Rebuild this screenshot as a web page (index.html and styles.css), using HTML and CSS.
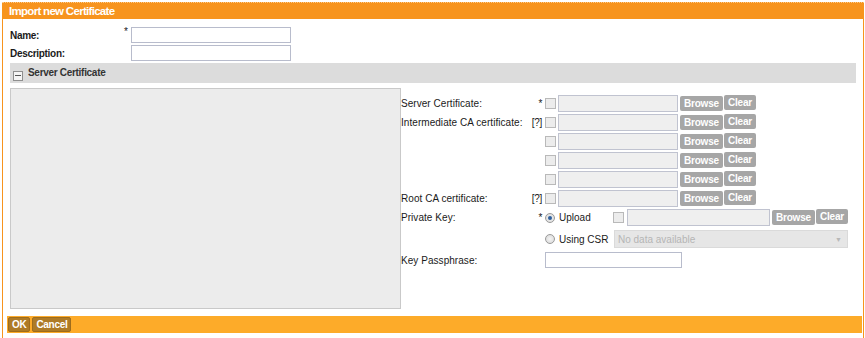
FILE: index.html
```html
<!DOCTYPE html>
<html>
<head>
<meta charset="utf-8">
<link rel="stylesheet" href="styles.css">
</head>
<body>
<div class="dialog">
  <div class="titlebar">Import new Certificate</div>
  <div class="content">
    <div class="frow">
      <span class="flabel">Name:</span><span class="fmark">*</span>
      <span class="text-input"></span>
    </div>
    <div class="frow">
      <span class="flabel">Description:</span><span class="fmark"></span>
      <span class="text-input"></span>
    </div>
    <div class="section-head">
      <span class="collapse-icon"></span>
      <span class="section-title">Server Certificate</span>
    </div>
    <div class="section-body">
      <div class="preview"></div>
      <div class="cert-form">
        <div class="crow">
          <span class="clabel">Server Certificate:</span><span class="cmark">*</span>
          <span class="chk"></span><span class="file-input"></span>
          <span class="btn-grey">Browse</span><span class="btn-grey clear">Clear</span>
        </div>
        <div class="crow">
          <span class="clabel">Intermediate CA certificate:</span><span class="cmark">[?]</span>
          <span class="chk"></span><span class="file-input"></span>
          <span class="btn-grey">Browse</span><span class="btn-grey clear">Clear</span>
        </div>
        <div class="crow">
          <span class="clabel"></span><span class="cmark"></span>
          <span class="chk"></span><span class="file-input"></span>
          <span class="btn-grey">Browse</span><span class="btn-grey clear">Clear</span>
        </div>
        <div class="crow">
          <span class="clabel"></span><span class="cmark"></span>
          <span class="chk"></span><span class="file-input"></span>
          <span class="btn-grey">Browse</span><span class="btn-grey clear">Clear</span>
        </div>
        <div class="crow">
          <span class="clabel"></span><span class="cmark"></span>
          <span class="chk"></span><span class="file-input"></span>
          <span class="btn-grey">Browse</span><span class="btn-grey clear">Clear</span>
        </div>
        <div class="crow">
          <span class="clabel">Root CA certificate:</span><span class="cmark">[?]</span>
          <span class="chk"></span><span class="file-input"></span>
          <span class="btn-grey">Browse</span><span class="btn-grey clear">Clear</span>
        </div>
        <div class="crow key-row">
          <span class="clabel">Private Key:</span><span class="cmark">*</span>
          <span class="radio-opt"><span class="radio checked"></span>Upload</span>
          <span class="chk"></span><span class="file-input wide"></span>
          <span class="btn-grey">Browse</span><span class="btn-grey clear">Clear</span>
        </div>
        <div class="crow csr-row">
          <span class="clabel"></span><span class="cmark"></span>
          <span class="radio-opt"><span class="radio"></span>Using CSR</span>
          <span class="select-box"><span class="select-text">No data available</span><span class="select-arrow">&#9660;</span></span>
        </div>
        <div class="crow pass-row">
          <span class="clabel">Key Passphrase:</span><span class="cmark"></span>
          <span class="pass-input"></span>
        </div>
      </div>
    </div>
  </div>
  <div class="footer">
    <span class="btn-gold">OK</span><span class="btn-gold">Cancel</span>
  </div>
</div>
</body>
</html>
```
FILE: styles.css
```css
html, body {
  margin: 0;
  padding: 0;
  background: #ffffff;
}
body {
  font-family: "Liberation Sans", Arial, sans-serif;
  font-size: 10px;
  color: #1a1a1a;
}
.dialog {
  margin: 2px 0 0 2px;
  width: 860px;
  height: 336px;
  border-left: 1px solid #f7941e;
  border-right: 1px solid #f7941e;
  box-sizing: content-box;
}
.titlebar {
  height: 17px;
  line-height: 16px;
  margin: 0 -1px;
  padding-left: 7px;
  background: #f7941e;
  color: #ffffff;
  font-weight: bold;
  font-size: 11.5px;
  letter-spacing: -0.7px;
  border-top: 1px dotted #fbc98a;
  box-sizing: border-box;
}
.content {
  padding: 8px 0 0 7px;
}
.frow {
  display: flex;
  align-items: center;
  height: 16px;
  margin-bottom: 2px;
}
.flabel {
  width: 108px;
  font-weight: bold;
  letter-spacing: -0.3px;
}
.fmark {
  width: 10px;
  text-align: right;
  line-height: 8px;
  align-self: flex-start;
  padding-top: 1px;
}
.text-input {
  margin-left: 3px;
  width: 160px;
  height: 16px;
  border: 1px solid #b8bccc;
  background: #ffffff;
  box-sizing: border-box;
}
.section-head {
  margin-top: 1px;
  width: 846px;
  height: 20px;
  background: #dcdcdc;
  display: flex;
  align-items: center;
}
.collapse-icon {
  width: 10px;
  height: 10px;
  margin-left: 3px;
  margin-top: 5px;
  border: 1px solid #8f8f8f;
  background: #f4f4f4;
  box-sizing: border-box;
  position: relative;
}
.collapse-icon::after {
  content: "";
  position: absolute;
  left: 1px;
  right: 1px;
  top: 3px;
  height: 1px;
  background: #555555;
}
.section-title {
  margin-left: 5px;
  font-weight: bold;
  color: #333333;
  letter-spacing: -0.3px;
  margin-top: -2px;
}
.section-body {
  display: flex;
  margin-top: 5px;
  width: 846px;
}
.preview {
  width: 391px;
  height: 221px;
  background: #ececec;
  border: 1px solid #c9c9c9;
  box-sizing: border-box;
}
.cert-form {
  padding-top: 7px;
}
.crow {
  display: flex;
  align-items: center;
  height: 17px;
  margin-bottom: 2px;
}
.clabel {
  width: 127px;
  letter-spacing: 0.05px;
  color: #1a1a1a;
}
.cmark {
  width: 14px;
  text-align: right;
  letter-spacing: -0.3px;
}
.chk {
  width: 11px;
  height: 11px;
  margin-left: 3px;
  border: 1px solid #b9b9b9;
  background: #ececec;
  box-sizing: border-box;
}
.file-input {
  margin-left: 2px;
  width: 120px;
  height: 17px;
  border: 1px solid #c0c3d0;
  background: #efefef;
  box-sizing: border-box;
}
.file-input.wide {
  width: 143px;
  margin-left: 3px;
}
.btn-grey {
  margin-left: 2px;
  height: 15px;
  line-height: 15px;
  padding: 0 4px;
  background: #a6a6a6;
  color: #ffffff;
  font-weight: bold;
  border-radius: 2px;
  letter-spacing: -0.2px;
}
.btn-grey.clear {
  margin-left: 1px;
  padding: 0 4px;
  margin-top: -2px;
}
.key-row {
  height: 17px;
  margin-bottom: 4px;
}
.key-row .btn-grey {
  padding: 0 4px;
}
.radio-opt {
  display: flex;
  align-items: center;
  width: 65px;
  margin-left: 3px;
  color: #1a1a1a;
}
.csr-row .radio-opt {
  width: 66px;
}
.radio {
  width: 10px;
  height: 10px;
  border-radius: 50%;
  border: 1px solid #9a9a9a;
  background: radial-gradient(circle, #f4f4f4 0, #d6d6d6 100%);
  box-sizing: border-box;
  margin-right: 4px;
  position: relative;
}
.radio.checked::after {
  content: "";
  position: absolute;
  left: 2px;
  top: 2px;
  width: 4px;
  height: 4px;
  border-radius: 50%;
  background: #2e5f9e;
}
.csr-row {
  height: 18px;
  margin-bottom: 4px;
}
.select-box {
  margin-left: 3px;
  width: 234px;
  height: 18px;
  background: #e6e6e6;
  border: 1px solid #dadada;
  box-sizing: border-box;
  display: flex;
  align-items: center;
  justify-content: space-between;
  padding: 0 5px 0 3px;
  color: #b5b5b5;
}
.select-arrow {
  font-size: 7px;
  color: #b8b8b8;
}
.pass-row {
  height: 16px;
}
.pass-input {
  margin-left: 3px;
  width: 137px;
  height: 16px;
  border: 1px solid #b8bccc;
  background: #ffffff;
  box-sizing: border-box;
}
.footer {
  margin: 7px 1px 0 4px;
  height: 17px;
  background: #fdab29;
  display: flex;
  align-items: center;
  padding-left: 1px;
}
.btn-gold {
  height: 15px;
  line-height: 13px;
  padding: 0 3px;
  margin-right: 2px;
  background: #ae7a26;
  border: 1px solid #9e6c1c;
  color: #ffffff;
  font-weight: bold;
  font-size: 10px;
  letter-spacing: -0.3px;
  border-radius: 2px;
  box-sizing: border-box;
}
```
